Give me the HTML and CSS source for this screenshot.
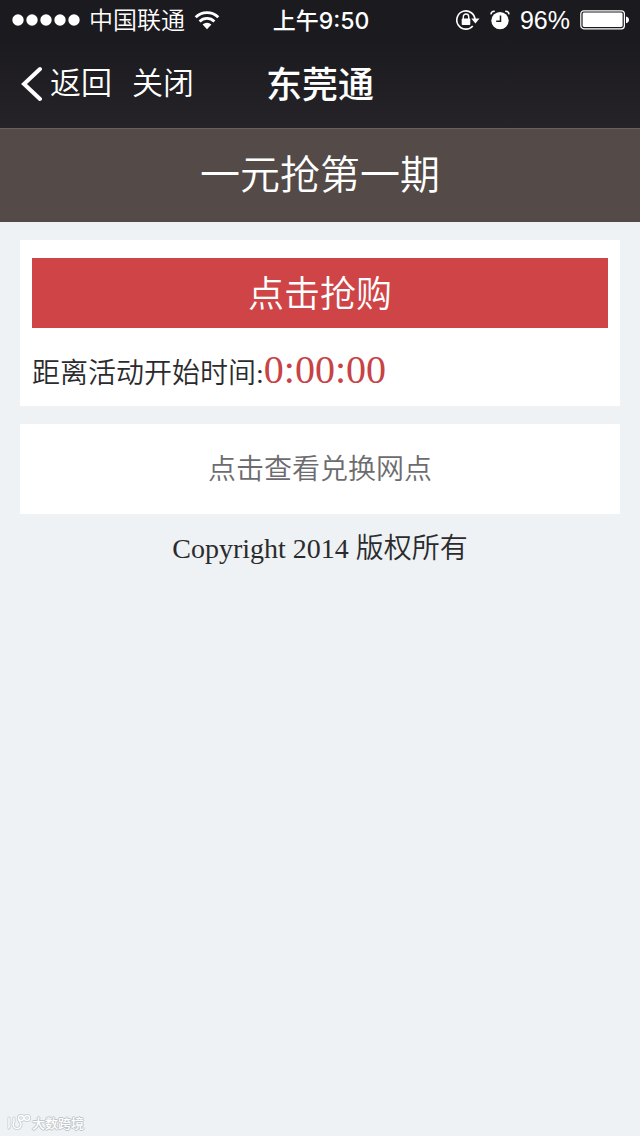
FILE: index.html
```html
<!DOCTYPE html>
<html lang="zh-CN">
<head>
<meta charset="utf-8">
<meta name="viewport" content="width=device-width, initial-scale=1">
<title>东莞通</title>
<link rel="stylesheet" href="styles.css">
</head>
<body>
<header class="top">
  <div class="status">
    <div class="status-left">
      <svg class="signal" width="68" height="12" viewBox="0 0 68 12" fill="#fff" aria-hidden="true"><circle cx="6" cy="6" r="5.7"/><circle cx="20" cy="6" r="5.7"/><circle cx="34" cy="6" r="5.7"/><circle cx="48" cy="6" r="5.7"/><circle cx="62" cy="6" r="5.7"/></svg>
      <span class="carrier">中国联通</span>
      <svg width="26" height="20" viewBox="0 0 26 20" aria-hidden="true"><g fill="none" stroke="#fff" stroke-width="2.8"><path d="M1.7 7.2a16 16 0 0 1 22.6 0"/><path d="M5.6 11.5a10.5 10.5 0 0 1 14.8 0"/></g><path d="M13 19.2l-4.4-4.6a6.2 6.2 0 0 1 8.8 0z" fill="#fff"/></svg>
    </div>
    <span class="time">上午9:50</span>
    <div class="status-right">
      <svg width="24" height="22" viewBox="0 0 24 22" aria-hidden="true"><path d="M19 11A9.1 9.1 0 1 0 16.8 17" fill="none" stroke="#fff" stroke-width="1.6"/><path d="M15.3 9.6h8.2l-4.1 4.8z" fill="#fff"/><rect x="5.7" y="9.6" width="8.6" height="6.4" rx=".8" fill="#fff"/><path d="M7.3 10V7.7a2.7 2.7 0 0 1 5.4 0V10" fill="none" stroke="#fff" stroke-width="1.4"/></svg>
      <svg width="20" height="20" viewBox="0 0 20 20" aria-hidden="true"><circle cx="10" cy="10.6" r="8.7" fill="#fff"/><path d="M10.5 5.5v5.8H6.2" fill="none" stroke="#1c1b1f" stroke-width="1.5"/><path d="M.9 4.4C1.2 2.4 2.8 1.2 4.8 1.4M19.1 4.4c-.3-2-1.9-3.2-3.9-3" fill="none" stroke="#fff" stroke-width="1.5"/></svg>
      <span class="percent">96%</span>
      <svg width="50" height="20" viewBox="0 0 50 20" aria-hidden="true"><rect x=".8" y=".8" width="43.6" height="18" rx="3" fill="none" stroke="#fff" stroke-width="1.2"/><rect x="2.6" y="2.6" width="40" height="14.4" rx="1.4" fill="#fff"/><path d="M46 6.4c4 .8 4 6 0 6.8z" fill="#fff"/></svg>
    </div>
  </div>
  <nav class="nav">
    <div class="nav-actions">
      <button class="nav-button" type="button"><svg width="22" height="36" viewBox="0 0 22 36" fill="none" stroke="#fff" stroke-width="4" stroke-linecap="round" aria-hidden="true"><path d="M20 3L4 18 20 33"/></svg><span>返回</span></button>
      <button class="nav-button" type="button">关闭</button>
    </div>
    <span class="nav-title">东莞通</span>
  </nav>
</header>
<h1 class="banner">一元抢第一期</h1>
<main class="content">
  <section class="card offer">
    <button class="buy" type="button">点击抢购</button>
    <p class="countdown">距离活动开始时间:<span class="timer">0:00:00</span></p>
  </section>
  <a class="card outlets" href="#">点击查看兑换网点</a>
  <p class="copyright">Copyright 2014 版权所有</p>
</main>
<footer class="mark">
  <svg width="24" height="18" viewBox="0 0 24 18" fill="none" stroke-linecap="round" stroke-linejoin="round" aria-hidden="true"><g stroke="#c6cbce" stroke-width="3"><path d="M2 4v10M7 4v4a4 4 0 1 0 5-1"/><circle cx="14" cy="4" r="2.5"/><circle cx="20" cy="4" r="2.5"/></g><g stroke="#fff" stroke-width="1.4"><path d="M2 4v10M7 4v4a4 4 0 1 0 5-1"/><circle cx="14" cy="4" r="2.5"/><circle cx="20" cy="4" r="2.5"/></g></svg>
  <span>大数跨境</span>
</footer>
</body>
</html>
```
FILE: styles.css
```css
* {
  box-sizing: border-box;
}

body {
  margin: 0;
  min-height: 100vh;
  display: flex;
  flex-direction: column;
  background: #eef2f4;
  color: #2b2b2e;
  font-family: "Liberation Serif", "Noto Sans CJK SC", serif;
  font-weight: 350;
}

button {
  border: 0;
  padding: 0;
  background: none;
  color: inherit;
  font: inherit;
  cursor: pointer;
}

svg {
  display: block;
  flex: none;
}

.top {
  background: linear-gradient(#1b1a1e 30%, #252327);
  border-bottom: 1px solid #6a6061;
  color: #fff;
  font-family: "Liberation Sans", "Noto Sans CJK SC", sans-serif;
}

.status {
  display: grid;
  grid-template-columns: 1fr auto 1fr;
  align-items: center;
  height: 40px;
  padding: 0 10px 0 12px;
  font-size: 24px;
  line-height: 40px;
}

.status-left,
.status-right {
  display: flex;
  align-items: center;
  gap: 9px;
}

.status-right {
  justify-content: flex-end;
  gap: 10px;
}

.carrier {
  padding-top: 2px;
  line-height: 38px;
}

.percent {
  font-size: 25px;
}

.time {
  padding-top: 2px;
  font-family: Inter, "Noto Sans CJK SC", sans-serif;
  font-size: 23px;
  font-weight: 500;
  line-height: 38px;
}

.nav {
  display: grid;
  grid-template-columns: 1fr auto 1fr;
  align-items: center;
  height: 88px;
  padding: 0 20px;
}

.nav-actions {
  display: flex;
  gap: 20px;
}

.nav-button {
  display: flex;
  align-items: center;
  gap: 8px;
  font-size: 31px;
  line-height: 44px;
}

.nav-title {
  padding-top: 4px;
  font-size: 36px;
  font-weight: 500;
  line-height: 44px;
}

.banner {
  margin: 0;
  padding: 17px 20px 16px;
  background: #544a48;
  color: #fff;
  font-size: 40px;
  font-weight: 350;
  line-height: 60px;
  text-align: center;
}

.content {
  flex: 1;
  display: flex;
  flex-direction: column;
  gap: 18px;
  padding: 18px 20px;
}

.card {
  background: #fff;
}

.offer {
  padding: 18px 12px 2px;
}

.buy {
  display: block;
  width: 100%;
  padding-top: 4px;
  background: #cf4547;
  color: #fff;
  font-size: 36px;
  line-height: 66px;
}

.countdown {
  margin: 12px 0 0;
  font-size: 28px;
  line-height: 60px;
}

.timer {
  color: #c74346;
  font-size: 40px;
}

.outlets {
  padding: 16px 12px 14px;
  color: #6c6b70;
  font-size: 28px;
  line-height: 60px;
  text-align: center;
  text-decoration: none;
}

.copyright {
  margin: 0;
  font-size: 28px;
  line-height: 34px;
  text-align: center;
}

.mark {
  display: flex;
  align-items: center;
  gap: 1px;
  padding: 0 7px 4px;
  color: #fff;
  font-family: "Noto Sans CJK SC", sans-serif;
  font-size: 13px;
  font-weight: 500;
  line-height: 18px;
  text-shadow: 1px 0 #c0c5c8, -1px 0 #c0c5c8, 0 1px #c0c5c8, 0 -1px #c0c5c8;
}
```
